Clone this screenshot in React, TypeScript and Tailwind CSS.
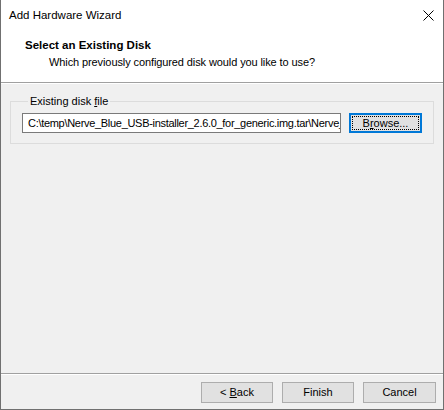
import React from "react";

export default function App() {
  return (
    <div
      className="w-[444px] h-[410px] flex flex-col bg-[#f0f0f0] border-l border-r border-b border-[#707070] text-[11px] text-black overflow-hidden"
      style={{ fontFamily: '"Liberation Sans", Arial, sans-serif' }}
    >
      {/* Title bar */}
      <div className="h-[30px] bg-white flex items-center justify-between pl-[8px] pr-[9px] shrink-0">
        <span className="text-[11.5px] leading-[16px]">Add Hardware Wizard</span>
        <svg width="11" height="11" viewBox="0 0 11 11" className="mt-[1px]">
          <path d="M0.5 0.5 L10.5 10.5 M10.5 0.5 L0.5 10.5" stroke="#000" strokeWidth="1" />
        </svg>
      </div>
      {/* Header */}
      <div className="h-[52px] bg-white shrink-0 pl-[24px] pt-[7px]">
        <div className="font-bold leading-[16px] text-[11.5px]">Select an Existing Disk</div>
        <div className="pl-[24px] leading-[16px] mt-[1px] tracking-[-0.1px]">Which previously configured disk would you like to use?</div>
      </div>
      <div className="h-[2px] border-t border-[#a0a0a0] border-b border-b-white shrink-0" />
      {/* Content */}
      <div className="flex-1 px-[9px] pt-[9px]">
        <fieldset className="border border-[#dcdcdc] px-[11px] pb-[10px] pt-[4px]">
          <legend className="ml-[6px] px-[2px] leading-[16px]">
            Existing disk <span className="underline">f</span>ile
          </legend>
          <div className="flex items-center gap-[8px]">
            <div className="w-[319px] h-[20px] bg-white border border-[#7a7a7a] pl-[5px] overflow-hidden whitespace-nowrap leading-[18px] text-clip tracking-[-0.3px]">
              C:\temp\Nerve_Blue_USB-installer_2.6.0_for_generic.img.tar\Nerve_Blue_USB-installer_2.6.0_for_generic.vmdk
            </div>
            <div className="w-[73px] h-[20px] border-2 border-[#0078d7] bg-[#e1e1e1] p-[1px] shrink-0">
              <div className="w-full h-full border border-dotted border-black flex items-center justify-center leading-[14px] whitespace-nowrap">
                B<span className="underline">r</span>owse...
              </div>
            </div>
          </div>
        </fieldset>
      </div>
      <div className="h-[2px] border-t border-[#a0a0a0] border-b border-b-white shrink-0" />
      {/* Buttons */}
      <div className="h-[34px] shrink-0 flex justify-end gap-[9px] pr-[7px] pt-[7px]">
        <button className="w-[72px] h-[21px] bg-[#e1e1e1] border border-[#adadad] leading-[19px]">
          &lt; <span className="underline">B</span>ack
        </button>
        <button className="w-[72px] h-[21px] bg-[#e1e1e1] border border-[#adadad] leading-[19px]">Finish</button>
        <button className="w-[73px] h-[21px] bg-[#e1e1e1] border border-[#adadad] leading-[19px]">Cancel</button>
      </div>
    </div>
  );
}
